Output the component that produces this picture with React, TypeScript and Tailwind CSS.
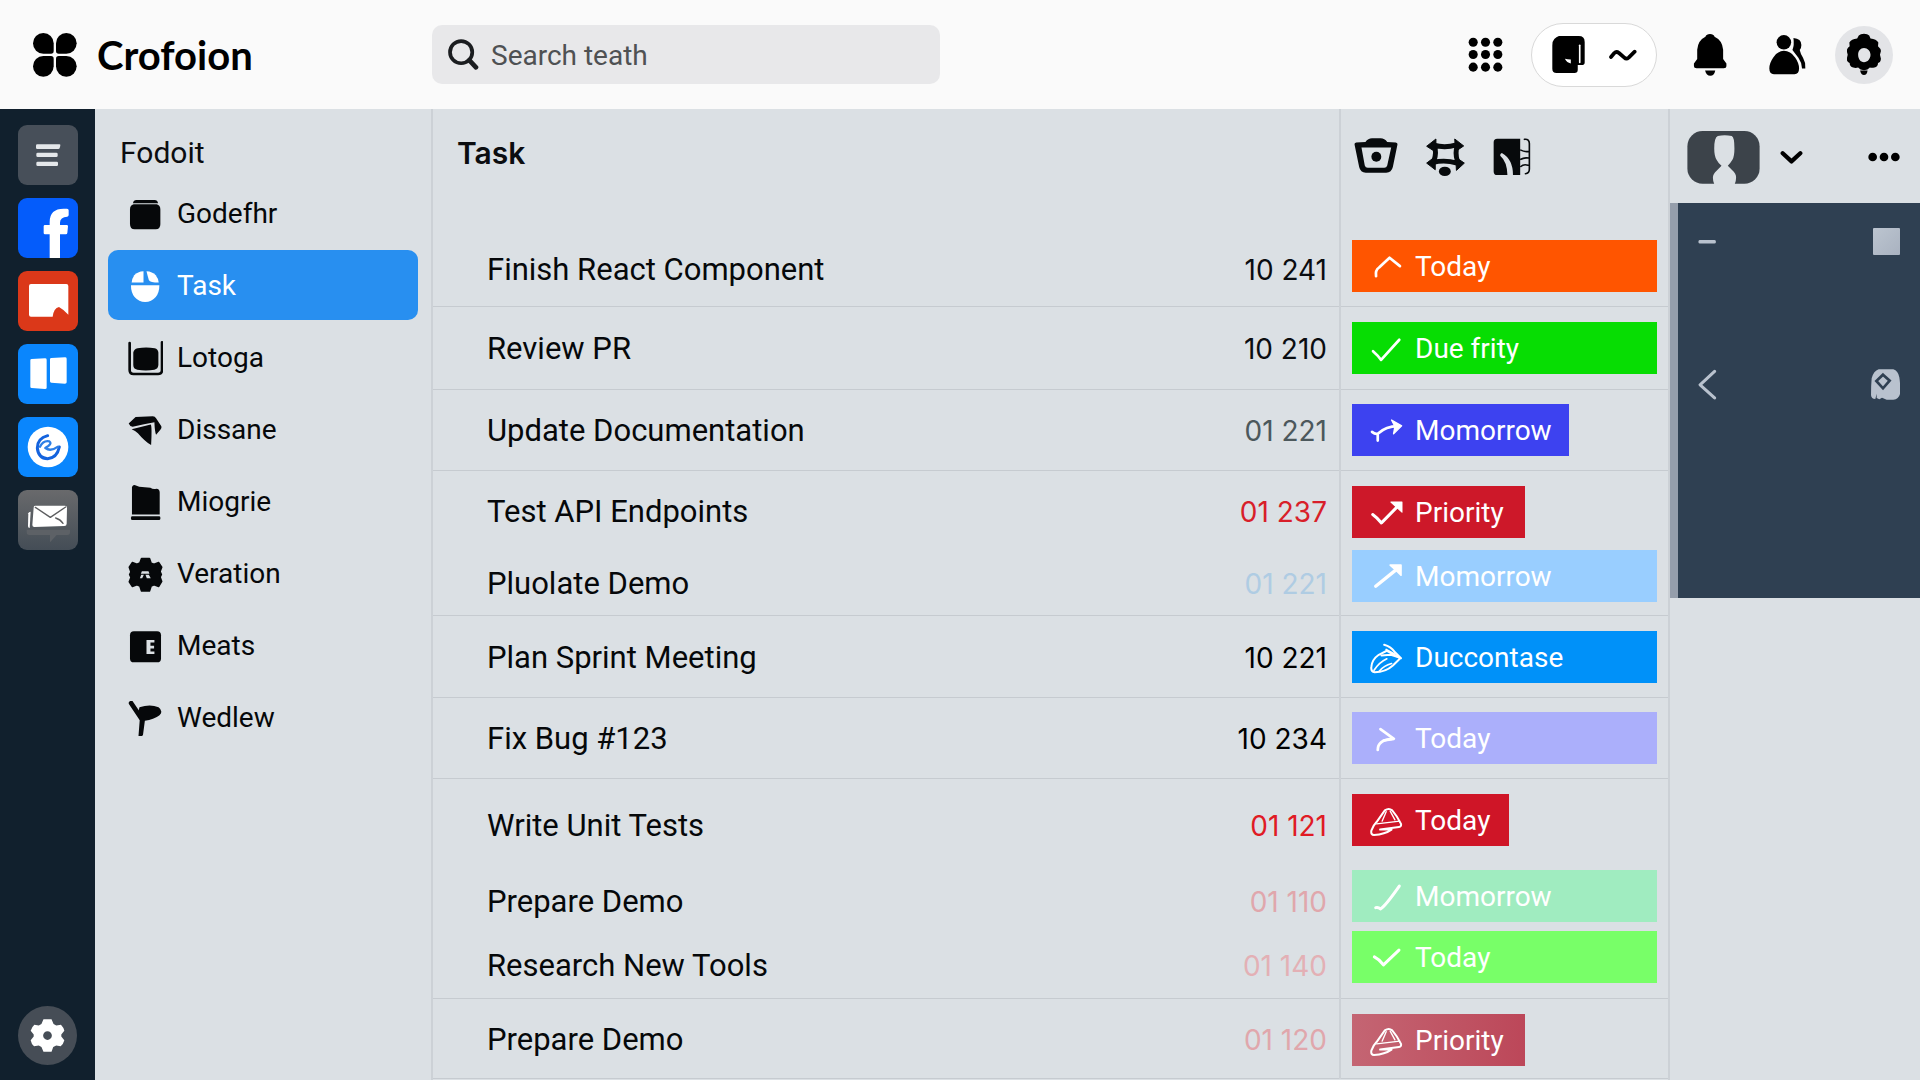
import React from "react";

type IconProps = { box: string; className: string; children: React.ReactNode };

function Glyph({ box, className, children }: IconProps) {
  return (
    <svg viewBox={box} className={className} fill="currentColor" aria-hidden="true">
      {children}
    </svg>
  );
}

const stroke = (width: number) => ({
  fill: "none",
  stroke: "currentColor",
  strokeWidth: width,
  strokeLinecap: "round" as const,
  strokeLinejoin: "round" as const,
});

/* ---------- Header ---------- */

function Header() {
  return (
    <header className="flex h-[109px] shrink-0 items-center bg-[#fafafa] pr-[27px]">
      <a href="#" className="flex w-[432px] shrink-0 items-center gap-5 pl-[33px] text-black">
        <Glyph box="99 97 132 132" className="size-[44px]">
          <path d="M130 97a31 31 0 0 1 31 31v23q0 8-8 8h-23a31 31 0 0 1 0-62z" />
          <path d="M199 97a31 31 0 0 1 0 62h-23q-8 0-8-8v-23a31 31 0 0 1 31-31z" />
          <path d="M130 166h23q8 0 8 8v23a31 31 0 1 1-31-31z" />
          <path d="M199 166a31 31 0 1 1-31 31v-23q0-8 8-8z" />
        </Glyph>
        <span className="font-[Lato] text-[40px] leading-[48px] font-bold">Crofoion</span>
      </a>
      <label className="flex h-[59px] w-[508px] items-center gap-3 rounded-[10px] bg-[#e8e8ea] pl-4 text-[#1b1d20]">
        <Glyph box="84 118 90 92" className="size-[31px] shrink-0">
          <circle cx="122" cy="157" r="33" {...stroke(11)} />
          <path d="M146 181l20 21" {...stroke(14)} />
        </Glyph>
        <input
          type="search"
          aria-label="Search"
          placeholder="Search teath"
          className="min-w-0 flex-1 bg-transparent pt-[2px] text-[28px] leading-9 text-[#333] outline-none placeholder:text-[#4f5153]"
        />
      </label>
      <nav className="ml-auto flex items-center text-black">
        <button aria-label="Apps" className="mr-7">
          <Glyph box="84 106 106 108" className="size-[35px]">
            {[122, 160, 199].map((y) =>
              [99, 137, 175].map((x) => <circle key={`${x}-${y}`} cx={x} cy={y} r="14" />)
            )}
          </Glyph>
        </button>
        <button
          aria-label="Workspace"
          className="mr-9 flex h-16 w-[126px] items-center justify-center gap-6 rounded-full border border-[#d9d9d9] bg-white"
        >
          <Glyph box="336 104 98 112" className="h-[37px] w-[33px]">
            <path d="M356 104h60q18 0 18 18v62q0 8-10 8h-11v14q0 10-10 10h-54q-13 0-13-13v-70q0-14 6-20t14-9z" />
            <path d="M419 132v52" {...stroke(5)} stroke="#fff" />
            <path d="M374 173q8 2 18 2v12q-12-2-18-14z" fill="#fff" />
          </Glyph>
          <Glyph box="503 144 84 42" className="h-[14px] w-7">
            <path d="M509 171l10-12q6-6 14 0l16 14q6 6 13 0l18-18" {...stroke(11)} />
          </Glyph>
        </button>
        <button aria-label="Notifications" className="mr-[42px]">
          <Glyph box="758 98 102 128" className="h-[42px] w-[34px]">
            <path d="M795 106q3-8 14-8t14 8q24 11 26 40v28l10 14v8q0 6-8 6h-83q-8 0-8-6v-8l10-14v-28q2-29 25-40z" />
            <path d="M794 209h31q-3 16-15 16t-16-16z" />
          </Glyph>
        </button>
        <button aria-label="People" className="mr-[29px]">
          <Glyph box="986 100 112 122" className="h-[41px] w-[37px]">
            <circle cx="1031" cy="124" r="22" />
            <path d="M1031 150q20 0 34 20 12 17 12 33t-14 18h-62q-14-2-14-18t12-33q14-20 32-20z" />
            <path d="M1060 111q24 2 24 21 0 10-5 15 2 10 10 24 9 16 7 32h-10q-1-18-11-32-12-16-18-24 6-14 3-36z" />
          </Glyph>
        </button>
        <button
          aria-label="Settings"
          className="flex size-[58px] items-center justify-center rounded-full bg-[#e3e4e7]"
        >
          <Glyph box="1219 96 104 132" className="h-[43px] w-[34px]">
            <path
              fillRule="evenodd"
              d="M1255 104q5-6 16-6t16 6l4 9q18 2 24 12l-1 12q9 8 9 14l-3 12 3 12q-1 12-9 13 0 12-11 14-8 2-14 0-6 8-18 8t-18-8q-8 3-15 0-11-3-11-14-9-2-9-13l3-12-3-12q0-7 9-14l-1-12q6-10 24-12zM1271 142c-11 0-18 9-18 21s7 23 18 23 20-11 20-23-9-21-20-21z"
            />
            <path d="M1259 211h23q-2 14-11 14t-12-14z" />
          </Glyph>
        </button>
      </nav>
    </header>
  );
}

/* ---------- App rail ---------- */

const railApps = [
  {
    name: "Menu",
    tile: "bg-[#474f59] text-[#e4e7ea]",
    box: "52 375 180 180",
    art: (
      <>
        <path d="M110 433h66q4 0 3 4l-2 7q-1 3-4 3h-63q-4 0-4-4v-6q0-4 4-4z" />
        <rect x="107" y="458" width="64" height="13" rx="4" />
        <rect x="107" y="485" width="65" height="13" rx="4" />
      </>
    ),
  },
  {
    name: "Facebook",
    tile: "bg-[#045cfb] text-white",
    box: "52 594 180 180",
    art: (
      <path d="M147 774v-71h-14q-4 0-4-4v-20q0-4 4-4h14v-9q0-40 42-40h10q5 0 5 5v14q0 4-4 5-22 1-22 18v7h20q4 0 4 4l-2 20q-1 4-4 4h-18v71z" />
    ),
  },
  {
    name: "Boards",
    tile: "bg-[#db3819] text-white",
    box: "52 813 180 180",
    art: (
      <path d="M91 852h106q6 0 6 6v86q-12-14-28-23-16 4-19 29h-65q-6 0-6-6v-86q0-6 6-6z" />
    ),
  },
  {
    name: "Columns",
    tile: "bg-[#0a86fd] text-white",
    box: "52 41 180 180",
    art: (
      <>
        <path d="M93 86l40-2q5 0 5 4v84q0 4-5 4l-40-3q-4 0-4-4v-79q0-4 4-4z" />
        <path d="M152 83l41-2q5 0 5 4v71q0 4-5 4l-41-3q-4 0-4-4v-66q0-4 4-4z" />
      </>
    ),
  },
  {
    name: "Browser",
    tile: "bg-[#0a86fd] text-white",
    box: "52 261 180 180",
    art: (
      <>
        <circle cx="142" cy="351" r="61" />
        <path d="M141 317q-31 8-31 37 3 31 31 32 28-2 35-35" {...stroke(9)} stroke="#1463de" />
        <path d="M118 350q10-20 28-16 8 6-3 14l-9 6q16 12 38-4" {...stroke(7)} stroke="#2d7fe6" />
      </>
    ),
  },
  {
    name: "Mail",
    tile: "bg-linear-to-b from-[#696a6c] to-[#444d56] text-white",
    box: "52 481 180 180",
    art: (
      <>
        <path d="M78 600h130v8q0 8-8 8h-32l-20 22v-22h-62q-8 0-8-8z" fill="#5d6166" />
        <path d="M83 551q1-5 7-5l-3 49q-5 0-5-6z" />
        <path d="M103 528h90q6 0 6 6l-1 48q0 7-7 7l-90 3q-6 0-6-6l4-52q0-6 4-6z" />
        <path d="M104 533l45 30 46-31M165 565q14 4 22 16" {...stroke(4)} stroke="#5c5d5f" />
      </>
    ),
  },
];

function Rail() {
  return (
    <nav
      aria-label="Applications"
      className="flex w-[95px] shrink-0 flex-col items-center gap-[13px] bg-[#11202d] pt-4 pb-[15px]"
    >
      {railApps.map((app) => (
        <button
          key={app.name}
          aria-label={app.name}
          className={`size-[60px] overflow-hidden rounded-[9px] ${app.tile}`}
        >
          <Glyph box={app.box} className="size-full">
            {app.art}
          </Glyph>
        </button>
      ))}
      <button
        aria-label="Preferences"
        className="mt-auto flex size-[59px] items-center justify-center rounded-full bg-[#464d56] text-white"
      >
        <Glyph box="-52 -52 104 104" className="size-[35px]">
          <path
            fillRule="evenodd"
            d="M-12-48h24l6 14 8 4 14-2q8 8 10 18l-9 11v6l9 11q-3 12-11 18l-13-2-9 4-5 14h-24l-6-14-8-4-14 2q-8-7-10-18l9-11v-6l-9-11q3-11 11-18l13 2 8-4zM0-13a13 13 0 1 0 0 26 13 13 0 0 0 0-26z"
          />
        </Glyph>
      </button>
    </nav>
  );
}

/* ---------- Side navigation ---------- */

const sections = [
  {
    name: "Godefhr",
    box: "385 591 106 106",
    art: (
      <>
        <path d="M410 600h56q8 0 10 10h-76q2-10 10-10z" />
        <path d="M402 613h70q11 3 11 16v44q0 16-14 16h-64q-14 0-14-16v-44q0-13 11-16z" />
      </>
    ),
  },
  {
    name: "Task",
    box: "385 803 106 106",
    active: true,
    art: (
      <>
        <path d="M432 810v34h-36q0-10 8-22 10-11 28-12z" />
        <path d="M441 810q18 1 28 12 8 10 9 22-26 0-30-8-2-6-7-26z" />
        <path d="M394 852h86q0 22-11 36-13 15-32 15t-32-15q-11-14-11-36z" />
      </>
    ),
  },
  {
    name: "Lotoga",
    box: "385 24 106 106",
    art: (
      <>
        <path d="M390 30v82q0 12 12 12h74q12 0 12-12V28" {...stroke(8)} />
        <path d="M414 46q26-5 52 0 10 2 11 13v38q-1 12-12 14-26 4-52 0-12-2-12-14V59q2-11 13-13z" />
      </>
    ),
  },
  {
    name: "Dissane",
    box: "385 246 106 106",
    art: (
      <>
        <path d="M408 258l52-2q7 0 10 6l16 24q2 5-3 11l-13 15q-4-10-5-38-30 5-66 14-8-1-12-10z" />
        <path d="M396 295l58-14q4 6 1 62-20-12-40-36-8-8-19-12z" />
      </>
    ),
  },
  {
    name: "Miogrie",
    box: "385 460 106 106",
    art: (
      <>
        <path d="M397 466q4-8 10-5l12 4 34 3q8 6 18 3 10 0 10 12v66h-84z" />
        <rect x="394" y="555" width="89" height="11" rx="4" />
      </>
    ),
  },
  {
    name: "Veration",
    box: "384 678 106 106",
    art: (
      <>
        <path
          d="M425 683h24l5 14 9 3 14-5 9 14-5 13 4 9-4 8 5 13-9 15-14-5-9 4-5 15h-24l-5-15-9-4-14 5-9-14 5-13-4-9 4-8-5-14 9-14 14 5 9-4z"
          stroke="currentColor"
          strokeWidth="5"
          strokeLinejoin="round"
        />
        <path d="M426 721h20l3 8h-26zM424 732h8l-5 10h-7zM437 732h10l6 10h-12z" fill="#dbe0e4" />
      </>
    ),
  },
  {
    name: "Meats",
    box: "384 256 106 106",
    art: (
      <>
        <rect x="390" y="263" width="94" height="94" rx="12" />
        <path d="M440 289h24v8h-12v10h11v8h-11v9h12v8h-24z" fill="#dbe0e4" />
      </>
    ),
  },
  {
    name: "Wedlew",
    box: "386 464 110 110",
    art: (
      <>
        <path d="M396 471l31 46" {...stroke(15)} />
        <path d="M422 484q34-12 60 0 16 12 3 25-18 14-46 17l-6 46q-4 4-14 2l4-52q-8-14-1-38z" />
      </>
    ),
  },
];

function Sidebar() {
  return (
    <aside className="w-[338px] shrink-0 border-r-2 border-[#ccd1d6] px-[13px] pt-[23px]">
      <h2 className="pl-3 text-[30px] leading-[42px]">Fodoit</h2>
      <ul className="mt-1 flex flex-col gap-[2px]">
        {sections.map((s) => (
          <li key={s.name}>
            <a
              href="#"
              aria-current={s.active ? "page" : undefined}
              className={`flex h-[70px] items-center gap-[14px] rounded-[10px] pt-[2px] pl-5 text-[28px] leading-9 ${
                s.active ? "bg-[#288ff0] text-white" : "text-[#06080a]"
              }`}
            >
              <Glyph box={s.box} className="size-[35px] shrink-0">
                {s.art}
              </Glyph>
              {s.name}
            </a>
          </li>
        ))}
      </ul>
    </aside>
  );
}

/* ---------- Task table ---------- */

const marks = {
  up: <path d="M532 501q-3-18 9-26l31-29 31 25" {...stroke(8)} />,
  check: <path d="M523 480q16 14 24 26l54-60" {...stroke(8)} />,
  arc: (
    <>
      <path d="M520 476q10 8 18 5 24-22 58-22M537 482v20" {...stroke(8)} />
      <path d="M578 441l30 17-24 24 4-22z" stroke="currentColor" strokeWidth="4" strokeLinejoin="round" />
    </>
  ),
  checkArrow: (
    <>
      <path d="M522 478q14 10 26 25l48-49" {...stroke(9)} />
      <path d="M576 441h33v30z" stroke="currentColor" strokeWidth="3" strokeLinejoin="round" />
    </>
  ),
  arrow: (
    <>
      <path d="M531 501l62-50" {...stroke(10)} />
      <path d="M574 438h32v30l-12-12z" stroke="currentColor" strokeWidth="5" strokeLinejoin="round" />
    </>
  ),
  hand: (
    <>
      <path d="M556 434q20 6 30 20l20 20-30-10-28 2" {...stroke(6)} />
      <path d="M518 500q2-22 22-36l24-12 40 22-22 22q-22 20-54 20-12-2-10-16z" {...stroke(6)} />
      <path d="M526 510q16-24 38-34M542 512q14-16 36-22M562 448l26 14" {...stroke(5)} />
    </>
  ),
  turn: (
    <>
      <path d="M537 506q0-30 42-33" {...stroke(8)} />
      <path d="M545 444l40 29-30 5" {...stroke(8)} />
    </>
  ),
  cap: (
    <>
      <path d="M518 502q6-16 16-26l24-34q12-8 22 0 14 16 26 40 2 8-6 9l-56 8 34 0q-20 14-52 16-10 0-8-13z" {...stroke(6)} />
      <path d="M534 482l68-8M562 446l-12 28M574 444l14 26" {...stroke(4)} />
    </>
  ),
  slash: <path d="M531 505q8-2 14 4 14-8 56-68" {...stroke(9)} />,
  tick: <path d="M527 470q16 8 27 24l46-44" {...stroke(9)} />,
};

type Task = {
  name: string;
  code: string;
  codeColor: string;
  due: string;
  mark: keyof typeof marks;
  badge: string;
  pad: string;
  line: boolean;
};

const tasks: Task[] = [
  { name: "Finish React Component", code: "10 241", codeColor: "text-[#0b0d10]", due: "Today", mark: "up", badge: "bg-[#ff5500]", pad: "pt-[9px] pb-[14px]", line: true },
  { name: "Review PR", code: "10 210", codeColor: "text-[#0b0d10]", due: "Due frity", mark: "check", badge: "bg-[#07dd03]", pad: "pt-[15px] pb-[15px]", line: true },
  { name: "Update Documentation", code: "01 221", codeColor: "text-[#4c585c]", due: "Momorrow", mark: "arc", badge: "bg-[#3d42f0] w-[217px]", pad: "pt-[14px] pb-[14px]", line: true },
  { name: "Test API Endpoints", code: "01 237", codeColor: "text-[#d81f2a]", due: "Priority", mark: "checkArrow", badge: "bg-[#cd1829] w-[173px]", pad: "pt-[15px] pb-3", line: false },
  { name: "Pluolate Demo", code: "01 221", codeColor: "text-[#afcce3]", due: "Momorrow", mark: "arrow", badge: "bg-[#99ceff]", pad: "pb-[13px]", line: true },
  { name: "Plan Sprint Meeting", code: "10 221", codeColor: "text-black", due: "Duccontase", mark: "hand", badge: "bg-[#0091f9]", pad: "pt-[15px] pb-[14px]", line: true },
  { name: "Fix Bug #123", code: "10 234", codeColor: "text-black", due: "Today", mark: "turn", badge: "bg-[#abaffb]", pad: "pt-[14px] pb-[14px]", line: true },
  { name: "Write Unit Tests", code: "01 121", codeColor: "text-[#e01b24]", due: "Today", mark: "cap", badge: "bg-[#cf1527] w-[157px]", pad: "pt-[15px] pb-6", line: false },
  { name: "Prepare Demo", code: "01 110", codeColor: "text-[#e0a7ac]", due: "Momorrow", mark: "slash", badge: "bg-[#a0ecc0]", pad: "pb-[9px]", line: false },
  { name: "Research New Tools", code: "01 140", codeColor: "text-[#e3b0b5]", due: "Today", mark: "tick", badge: "bg-[#78ff68]", pad: "pb-[15px]", line: true },
  { name: "Prepare Demo", code: "01 120", codeColor: "text-[#e0a7ac]", due: "Priority", mark: "cap", badge: "bg-linear-to-r from-[#c46573] to-[#bc4759] w-[173px]", pad: "pt-[15px] pb-3", line: true },
];

function Toolbar() {
  return (
    <div className="flex items-start gap-7 pl-[13px] text-[#070a0c]">
      <button aria-label="Basket">
        <Glyph box="464 83 132 106" className="h-[35px] w-[44px]">
          <path
            fillRule="evenodd"
            d="M470 97l28-2q8-11 20-11h26q12 0 20 11l26 2q6 1 5 6l-14 68q-4 17-20 17h-62q-16 0-20-17l-14-68q-1-5 5-6zM486 112l10 54q2 7 9 7h50q7 0 9-7l12-54z"
          />
          <circle cx="531" cy="140" r="15" />
        </Glyph>
      </button>
      <button aria-label="Sync">
        <Glyph box="677 84 116 118" className="size-[39px]">
          <path d="M700 106q34 9 68-1M698 158q34-9 72 2M701 108q8 20-1 46M771 108q-8 20 0 46" {...stroke(15)} />
          <path
            d="M706 87v40l-28-18zM763 87l27 21-25 17zM704 140v40l-26-20zM766 142l26 18-24 22z"
            stroke="currentColor"
            strokeWidth="3"
            strokeLinejoin="round"
          />
          <ellipse cx="733" cy="185" rx="18" ry="14" />
        </Glyph>
      </button>
      <button aria-label="Library">
        <Glyph box="881 83 116 116" className="size-[38px]">
          <path d="M894 85h70v111h-22q0-48-34-67-6 2-5 8 21 18 22 59h-31q-11 0-11-11v-89q0-11 11-11z" />
          <path
            d="M977 87q15-2 15 13v78q0 14-12 14M966 120q12 6 24 4M966 148q10-6 24-4M966 170q8-8 22-4"
            {...stroke(5)}
          />
        </Glyph>
      </button>
    </div>
  );
}

function TaskTable() {
  return (
    <main className="min-w-0 flex-1 border-r-2 border-[#ccd1d6]">
      <table className="w-full border-collapse text-left">
        <thead>
          <tr className="h-[122px] align-top">
            <th
              scope="col"
              colSpan={2}
              className="border-r-2 border-[#ccd1d6] pt-[26px] pl-6 font-[Inter] text-[30px] leading-9 font-semibold"
            >
              Task
            </th>
            <th scope="col" className="w-[328px] pt-[29px]">
              <Toolbar />
            </th>
          </tr>
        </thead>
        <tbody>
          {tasks.map((t, i) => (
            <tr key={i} className={t.line ? "border-b border-[#c6cbd0]" : ""}>
              <td className="pt-[2px] pl-[54px] text-[31px] leading-9 text-[#06080a]">{t.name}</td>
              <td
                className={`border-r-2 border-[#ccd1d6] pt-[2px] pr-3 text-right font-[Inter] text-[28px] leading-9 ${t.codeColor}`}
              >
                {t.code}
              </td>
              <td className={`px-[11px] align-top ${t.pad}`}>
                <span className={`flex h-[52px] items-center gap-3 pt-[2px] pl-[18px] text-[28px] leading-9 text-white ${t.badge}`}>
                  <Glyph box="514 426 98 98" className="size-[33px] shrink-0">
                    {marks[t.mark]}
                  </Glyph>
                  {t.due}
                </span>
              </td>
            </tr>
          ))}
        </tbody>
      </table>
    </main>
  );
}

/* ---------- Right panel ---------- */

function DetailPanel() {
  return (
    <aside className="w-[250px] shrink-0">
      <div className="flex h-[94px] items-center pt-[2px] pr-5 pl-[17px]">
        <button aria-label="Profile" className="flex items-center gap-5">
          <Glyph box="741 395 220 160" className="h-[53px] w-[73px]">
            <rect x="742" y="395" width="218" height="159" rx="46" fill="#3c434a" />
            <path
              d="M834 410q20-4 42 0 8 3 8 38 0 24-6 34-6 10-14 18l12 12q14 12 13 24 0 10-4 19h-62q-4-9-4-19 0-12 12-22l14-14q-10-8-15-18-7-12-7-34 0-34 11-38z"
              fill="#dbe0e4"
            />
          </Glyph>
          <Glyph box="1017 452 70 46" className="h-[15px] w-[23px] text-black">
            <path d="M1025 462l27 25 27-25" {...stroke(13)} />
          </Glyph>
        </button>
        <button aria-label="More" className="ml-auto">
          <Glyph box="1282 458 96 30" className="h-[10px] w-8 text-black">
            <circle cx="1296" cy="473" r="13" />
            <circle cx="1330" cy="473" r="13" />
            <circle cx="1364" cy="473" r="13" />
          </Glyph>
        </button>
      </div>
      <div className="flex h-[395px] flex-col gap-[114px] border-l-8 border-[#959eab] bg-[#2f4052] pt-6 pr-5 pl-5 text-[#b9c2ce]">
        <div className="flex h-7 items-center justify-between">
          <button aria-label="Minimize">
            <Glyph box="173 378 54 40" className="h-[13px] w-[18px]">
              <rect x="174" y="393" width="53" height="11" rx="4" />
            </Glyph>
          </button>
          <button
            aria-label="Maximize"
            className="size-[27px] rounded-[1px] bg-linear-to-br from-[#bcc5d0] to-[#a9b2c0]"
          />
        </div>
        <div className="flex h-[31px] items-center justify-between">
          <button aria-label="Back">
            <Glyph box="173 780 56 92" className="h-[31px] w-[19px]">
              <path d="M222 787l-43 40 43 39" {...stroke(9)} />
            </Glyph>
          </button>
          <button aria-label="Pin">
            <Glyph box="692 780 90 93" className="h-[31px] w-[30px]">
              <path d="M716 781h46q14 4 18 24 4 26 2 50-4 16-20 17h-20l-14-6-8 5-8-4v-13l-4 16q-12 0-13-12 0-28 2-50 6-22 21-27z" />
              <path d="M731 797l20 18-20 23-20-22z" fill="none" stroke="#2f4052" strokeWidth="8" />
            </Glyph>
          </button>
        </div>
      </div>
    </aside>
  );
}

export default function App() {
  return (
    <div className="flex min-h-screen flex-col bg-[#dbe0e4] font-[Roboto,sans-serif] text-[#0b0d10]">
      <Header />
      <div className="flex flex-1">
        <Rail />
        <Sidebar />
        <TaskTable />
        <DetailPanel />
      </div>
    </div>
  );
}
